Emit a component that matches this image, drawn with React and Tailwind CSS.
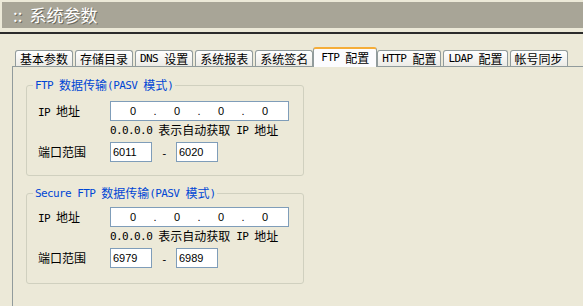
import React from 'react';

// half-width latin, like the old SimSun 6px cells
const L = ({ children }) => (
  <span className="font-['DejaVu_Sans_Mono',monospace] text-[11px] leading-none tracking-[-0.6px] whitespace-pre">{children}</span>
);

const tabs = [
  { label: '基本参数' },
  { label: '存储目录' },
  { label: <><L>DNS </L>设置</> },
  { label: '系统报表' },
  { label: '系统签名' },
  { label: <><L>FTP </L>配置</>, active: true },
  { label: <><L>HTTP </L>配置</> },
  { label: <><L>LDAP </L>配置</> },
  { label: '帐号同步' },
];

const Tab = ({ label, active }) =>
  active ? (
    <div className="relative z-10 -mx-[2px] -mb-px flex h-[20px] items-center rounded-t-[3px] border border-b-0 border-[#919b9c] border-t-2 border-t-[#f5ad38] bg-[#fcfcfe] px-[7px] pb-[1px]">
      {label}
    </div>
  ) : (
    <div className="flex h-[16px] items-center rounded-t-[3px] border border-b-0 border-[#919b9c] bg-linear-to-b from-white to-[#ecebe6] px-[4px]">
      {label}
    </div>
  );

const IpBox = () => (
  <div className="flex h-[20px] w-[179px] items-center border border-[#7f9db9] bg-white pl-[4px] font-['Liberation_Sans',sans-serif] text-[11px]">
    <span className="w-[36px] text-center">0</span>
    <span className="w-[8px] text-center">.</span>
    <span className="w-[36px] text-center">0</span>
    <span className="w-[8px] text-center">.</span>
    <span className="w-[36px] text-center">0</span>
    <span className="w-[8px] text-center">.</span>
    <span className="w-[36px] text-center">0</span>
  </div>
);

const PortBox = ({ value }) => (
  <div className="flex h-[20px] w-[42px] items-center border border-[#7f9db9] bg-white pl-[2px] font-['Liberation_Sans',sans-serif] text-[11px]">
    {value}
  </div>
);

const Group = ({ legend, from, to, tight }) => (
  <fieldset className="h-[98px] w-[278px] rounded-[3px] border border-[#d0d0bf]">
    <legend className="ml-[6px] flex h-[14px] items-center px-[2px] text-[#0046d5]">{legend}</legend>
    <div className={tight ? 'pl-[11px] pt-[7px]' : 'pl-[11px] pt-[9px]'}>
      <div className="flex h-[20px] items-center">
        <span className="w-[72px]"><L>IP </L>地址</span>
        <IpBox />
      </div>
      <div className="mt-[2px] flex h-[14px] items-center pl-[72px]">
        <L>0.0.0.0 </L>表示自动获取<L> IP </L>地址
      </div>
      <div className="mt-[5px] flex h-[20px] items-center">
        <span className="w-[72px]">端口范围</span>
        <PortBox value={from} />
        <span className="w-[24px] text-center"><L>-</L></span>
        <PortBox value={to} />
      </div>
    </div>
  </fieldset>
);

export default function App() {
  return (
    <div className="flex h-[306px] w-[583px] flex-col overflow-hidden bg-[#ece9d8] font-['Noto_Sans_CJK_SC',sans-serif] text-[12px] leading-[14px] text-black">
      {/* title bar */}
      <div className="pl-[2px] pt-[2px]">
        <div className="flex h-[26px] items-center bg-[#a8a597] pl-[11px] text-[17px] leading-[20px] text-white [text-shadow:1px_1px_0_#6b695f]">
          <span>::</span>
          <span className="ml-[7px]">系统参数</span>
        </div>
      </div>
      <div className="mt-[4px] h-[2px] bg-[#2b2b2b]" />

      {/* tab strip */}
      <div className="ml-[12px] flex h-[32px] items-end gap-[2px] pl-[3px]">
        {tabs.map((t, i) => (
          <Tab key={i} label={t.label} active={t.active} />
        ))}
      </div>

      {/* panel */}
      <div className="ml-[12px] flex-1 border-l border-t border-[#919b9c] pl-[13px] pt-[11px]">
        <Group legend={<><L>FTP </L>数据传输<L>(PASV </L>模式<L>)</L></>} from="6011" to="6020" />
        <div className="mt-[10px]">
          <Group legend={<><L>Secure FTP </L>数据传输<L>(PASV </L>模式<L>)</L></>} from="6979" to="6989" tight />
        </div>
      </div>
    </div>
  );
}
